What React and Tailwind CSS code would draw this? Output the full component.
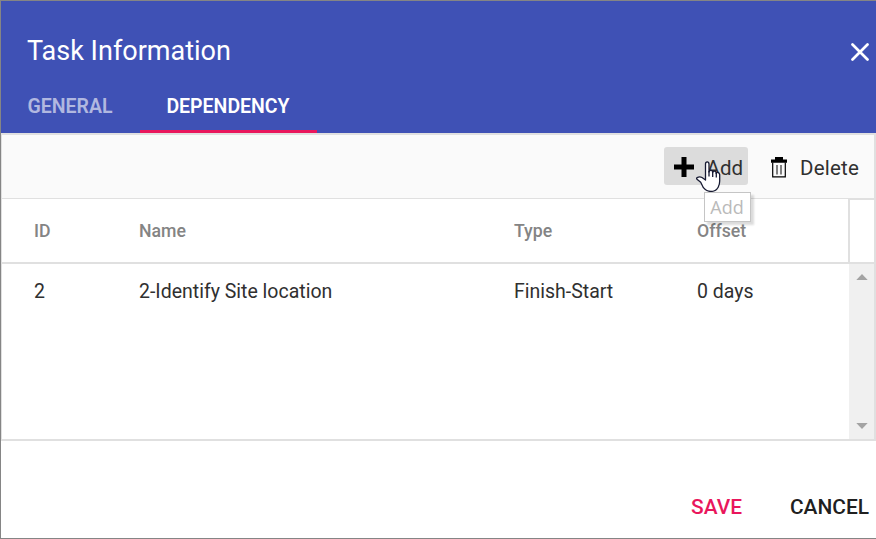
import React from "react";

const columns = "grid grid-cols-[105px_375px_183px_1fr] pl-8 items-center";

function Arrow({ down }) {
  return (
    <svg width="12" height="6" viewBox="0 0 12 6" fill="#a3a3a3">
      <path d={down ? "M0.3 0H11.7L6 6Z" : "M6 0L11.7 6H0.3Z"} />
    </svg>
  );
}

function Cursor() {
  return (
    <svg className="absolute left-[32px] top-[14px]" width="26" height="32" viewBox="0 0 26 32">
      <path
        d="M9.5 19V3Q9.5 .8 11.2 .8T13 3V11Q13.3 9.4 15 9.4T16.6 11.6Q17 10 18.6 10.2T20.2 12.4Q20.8 11.2 22.1 11.5T23.7 13.7V20Q23.7 23.5 22.2 26.2Q19.8 30.5 14.8 30.5Q10.5 30.5 7.4 26.7L4.7 21.3L1 18.2Q.1 17.3 1.2 16.6Q3.6 15.2 6 16.5L9.5 19Z"
        fill="white" stroke="#171a32" strokeWidth="1.3" strokeLinejoin="round"
      />
      <path d="M13 10V15.5M16.7 11V16M20.3 12V16.5" stroke="#171a32" strokeWidth="1.3" />
    </svg>
  );
}

export default function App() {
  return (
    <div className="flex h-[539px] w-[876px] flex-col overflow-hidden border-b border-l border-t border-[#858585] bg-white font-[Roboto,sans-serif]">
      <header className="flex h-[132px] shrink-0 flex-col bg-[#3f51b5] text-white">
        <div className="flex h-[79px] items-center justify-between pl-[26px] pr-[7px] pt-[20px]">
          <h1 className="text-[27px] leading-8">Task Information</h1>
          <svg className="mt-[3px]" width="18" height="18" viewBox="0 0 18 18" fill="none" stroke="white" strokeWidth="2.7" strokeLinecap="round">
            <path d="M1.5 1.5L16.5 16.5M16.5 1.5L1.5 16.5" />
          </svg>
        </div>
        <nav className="flex h-[53px] text-[19.5px] font-semibold">
          <div className="flex w-[139px] justify-center border-b-[3px] border-transparent pr-px leading-[53px] text-white/60">GENERAL</div>
          <div className="flex w-[177px] justify-center border-b-[3px] border-[#e9165c] pr-px leading-[53px]">DEPENDENCY</div>
        </nav>
      </header>
      <section className="flex h-[308px] shrink-0 flex-col border-2 border-l border-[#e0e0e0]">
        <div className="flex h-[64px] shrink-0 items-center justify-end border-b border-[#e0e0e0] bg-[#fafafa] pb-px pr-[15px] text-[20.5px] text-[#303030]">
          <div className="relative flex h-[38px] w-[84px] items-center justify-between rounded-[3px] bg-[#dcdcdc] pl-[10px] pr-[5px]">
            <svg className="mt-[2px]" width="20" height="20" viewBox="0 0 20 20" fill="black">
              <path d="M7.5 0h5v7.5H20v5h-7.5V20h-5v-7.5H0v-5h7.5z" />
            </svg>
            <span className="pt-[4px]">Add</span>
            <Cursor />
            <div className="absolute left-[40px] top-[45px] z-10 flex h-[30px] w-[47px] items-center justify-center border border-[#c5c5c5] bg-white pr-px font-['Open_Sans',sans-serif] text-[18px] text-[#bababa] shadow-[3px_3px_2px_#00000024]">Add</div>
          </div>
          <div className="ml-[23px] flex items-center">
            <svg className="mt-[2px]" width="16" height="21" viewBox="0 0 16 21" fill="none" stroke="black">
              <path d="M0 2.5H4V0H12V2.5H16V5.8H0Z" fill="black" stroke="none" />
              <path d="M1.7 5.5V19.9H14.3V5.5" strokeWidth="1.2" />
              <path d="M6 8V17.5M10 8V17.5" strokeWidth="1.3" stroke="#404040" />
            </svg>
            <span className="ml-[13px] pt-[4px] tracking-[0.2px]">Delete</span>
          </div>
        </div>
        <div className="flex h-[65px] shrink-0 border-b-2 border-[#e0e0e0]">
          <div className={`${columns} flex-1 pt-[2px] text-[17.7px] font-medium text-[#848484]`}>
            <span>ID</span><span>Name</span><span>Type</span><span>Offset</span>
          </div>
          <div className="w-[26px] border-l-2 border-t border-[#e0e0e0]" />
        </div>
        <div className="flex flex-1">
          <div className={`${columns} h-[56px] flex-1 text-[19.5px] text-[#303030]`}>
            <span>2</span><span>2-Identify Site location</span><span>Finish-Start</span><span>0 days</span>
          </div>
          <div className="flex w-[25px] flex-col items-center justify-between bg-[#f0f0f0] py-[10px]">
            <Arrow /><Arrow down />
          </div>
        </div>
      </section>
      <footer className="flex flex-1 items-center justify-end gap-12 pr-[7px] pt-[36px] text-[20.9px] font-medium">
        <button className="text-[#e9165c]">SAVE</button>
        <button className="text-[#202020]">CANCEL</button>
      </footer>
    </div>
  );
}
